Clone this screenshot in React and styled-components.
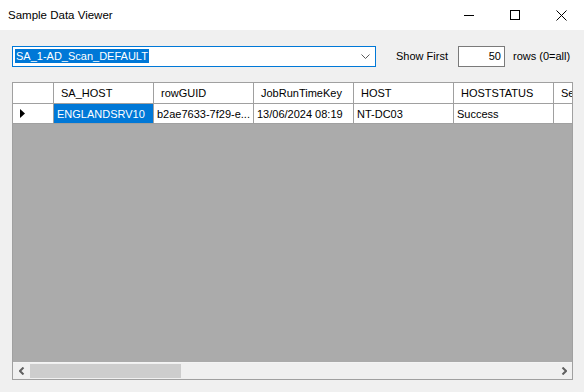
import React from 'react';
import styled, { createGlobalStyle } from 'styled-components';

const GlobalStyle = createGlobalStyle`
  html, body {
    margin: 0;
    padding: 0;
    background: #f0f0f0;
    overflow: hidden;
  }
  * {
    box-sizing: border-box;
  }
`;

const columns = [
  { key: 'host', title: 'SA_HOST' },
  { key: 'guid', title: 'rowGUID' },
  { key: 'runKey', title: 'JobRunTimeKey' },
  { key: 'node', title: 'HOST' },
  { key: 'status', title: 'HOSTSTATUS' },
  { key: 'se', title: 'Se' },
];

const rows = [
  {
    host: 'ENGLANDSRV10',
    guid: 'b2ae7633-7f29-e...',
    runKey: '13/06/2024 08:19',
    node: 'NT-DC03',
    status: 'Success',
    se: '',
  },
];

function WindowControls() {
  return (
    <Controls>
      <ControlButton>
        <svg width="10" height="10" viewBox="0 0 10 10">
          <path d="M0 5.5h10" stroke="#000" strokeWidth="1" />
        </svg>
      </ControlButton>
      <ControlButton>
        <svg width="10" height="10" viewBox="0 0 10 10">
          <rect x="0.5" y="0.5" width="9" height="9" fill="none" stroke="#000" strokeWidth="1" />
        </svg>
      </ControlButton>
      <ControlButton>
        <svg width="11" height="11" viewBox="0 0 11 11">
          <path d="M0.5 0.5l10 10M10.5 0.5l-10 10" stroke="#000" strokeWidth="1" />
        </svg>
      </ControlButton>
    </Controls>
  );
}

function App() {
  return (
    <Window>
      <GlobalStyle />
      <TitleBar>
        <Title>Sample Data Viewer</Title>
        <WindowControls />
      </TitleBar>
      <Toolbar>
        <Combo>
          <Selected>SA_1-AD_Scan_DEFAULT</Selected>
          <svg width="9" height="5" viewBox="0 0 9 5">
            <path d="M0.5 0.5l4 4 4-4" fill="none" stroke="#5a5a5a" strokeWidth="1" />
          </svg>
        </Combo>
        <Label>Show First</Label>
        <NumberBox>50</NumberBox>
        <Label $tight>rows (0=all)</Label>
      </Toolbar>
      <Grid>
        <HeaderRow>
          <RowHeader />
          {columns.map((col) => (
            <HeaderCell key={col.key}>{col.title}</HeaderCell>
          ))}
        </HeaderRow>
        {rows.map((row, i) => (
          <DataRow key={i}>
            <RowHeader>
              <svg width="5" height="9" viewBox="0 0 5 9">
                <path d="M0 0l5 4.5L0 9z" fill="#000" />
              </svg>
            </RowHeader>
            {columns.map((col, c) => (
              <Cell key={col.key} $selected={c === 0}>
                {row[col.key]}
              </Cell>
            ))}
          </DataRow>
        ))}
        <Empty />
        <ScrollBar>
          <ArrowButton>
            <svg width="6" height="8" viewBox="0 0 6 8">
              <path d="M4.5 0.5L1 4l3.5 3.5" fill="none" stroke="#606060" strokeWidth="2" />
            </svg>
          </ArrowButton>
          <Track>
            <Thumb />
          </Track>
          <ArrowButton>
            <svg width="6" height="8" viewBox="0 0 6 8">
              <path d="M1.5 0.5L5 4l-3.5 3.5" fill="none" stroke="#606060" strokeWidth="2" />
            </svg>
          </ArrowButton>
        </ScrollBar>
      </Grid>
    </Window>
  );
}

export default App;

const Window = styled.div`
  width: 584px;
  height: 392px;
  display: flex;
  flex-direction: column;
  background: #f0f0f0;
  font-family: 'Liberation Sans', Arial, sans-serif;
  font-size: 11px;
  color: #000;
`;

const TitleBar = styled.div`
  height: 30px;
  flex: none;
  display: flex;
  align-items: center;
  justify-content: space-between;
  background: #fff;
  padding-left: 8px;
`;

const Title = styled.span`
  font-size: 11.5px;
  color: #000;
`;

const Controls = styled.div`
  display: flex;
  height: 100%;
`;

const ControlButton = styled.div`
  width: 46px;
  height: 100%;
  display: flex;
  align-items: center;
  justify-content: center;
`;

const Toolbar = styled.div`
  display: flex;
  align-items: center;
  height: 52px;
  padding: 0 0 0 12px;
`;

const Combo = styled.div`
  width: 364px;
  height: 21px;
  display: flex;
  align-items: center;
  justify-content: space-between;
  background: #fff;
  border: 1px solid #0078d7;
  padding: 0 5px 0 2px;
  margin-right: 20px;
`;

const Selected = styled.span`
  background: #0078d7;
  color: #fff;
  line-height: 14px;
  padding: 0 1px;
`;

const Label = styled.span`
  margin-right: ${({ $tight }) => ($tight ? '0' : '10px')};
  white-space: nowrap;
`;

const NumberBox = styled.div`
  width: 47px;
  height: 21px;
  background: #fff;
  border: 1px solid #7a7a7a;
  display: flex;
  align-items: center;
  justify-content: flex-end;
  padding-right: 3px;
  margin-right: 8px;
`;

const Grid = styled.div`
  width: 561px;
  height: 298px;
  margin-left: 12px;
  display: flex;
  flex-direction: column;
  border: 1px solid #a0a0a0;
  background: #ababab;
  overflow: hidden;
`;

const HeaderRow = styled.div`
  display: flex;
  flex: none;
  height: 21px;
  background: #fff;
`;

const DataRow = styled.div`
  display: flex;
  flex: none;
  height: 20px;
  background: #fff;
`;

const RowHeader = styled.div`
  width: 41px;
  flex: none;
  border-right: 1px solid #a0a0a0;
  border-bottom: 1px solid #a0a0a0;
  display: flex;
  align-items: center;
  padding-left: 7px;
`;

const HeaderCell = styled.div`
  width: 100px;
  flex: none;
  border-right: 1px solid #a0a0a0;
  border-bottom: 1px solid #a0a0a0;
  display: flex;
  align-items: center;
  padding-left: 7px;
  white-space: nowrap;
  overflow: hidden;
`;

const Cell = styled.div`
  width: 100px;
  flex: none;
  border-right: 1px solid #a0a0a0;
  border-bottom: 1px solid #a0a0a0;
  display: flex;
  align-items: center;
  padding-left: 3px;
  white-space: nowrap;
  overflow: hidden;
  background: ${({ $selected }) => ($selected ? '#0078d7' : '#fff')};
  color: ${({ $selected }) => ($selected ? '#fff' : '#000')};
`;

const Empty = styled.div`
  flex: 1;
  background: #ababab;
`;

const ScrollBar = styled.div`
  height: 17px;
  flex: none;
  display: flex;
  background: #f0f0f0;
  border-top: 1px solid #f4f4f4;
`;

const ArrowButton = styled.div`
  width: 17px;
  flex: none;
  display: flex;
  align-items: center;
  justify-content: center;
`;

const Track = styled.div`
  flex: 1;
  display: flex;
  align-items: stretch;
  padding: 1px 0;
`;

const Thumb = styled.div`
  width: 151px;
  background: #cdcdcd;
`;
